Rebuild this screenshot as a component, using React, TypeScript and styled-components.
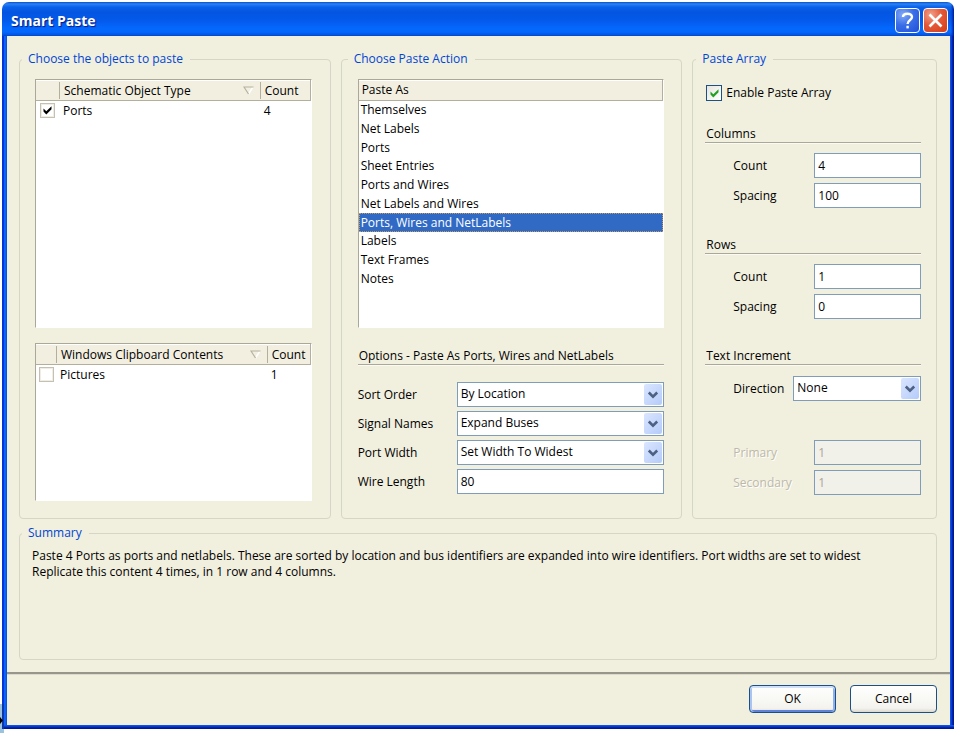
import React, { useId, useState } from "react";
import styled, { createGlobalStyle, css } from "styled-components";

const face = "#f1efde";
const fieldBorder = "#7f9db9";

const tick = (color: string) =>
  `url("data:image/svg+xml,${encodeURIComponent(
    `<svg xmlns='http://www.w3.org/2000/svg' viewBox='0 0 11 11'><path d='M1.5 3.5 L4.3 6.3 L9.5 1.2 V4.2 L4.3 9.4 L1.5 6.6 Z' fill='${color}'/></svg>`
  )}")`;

const GlobalStyle = createGlobalStyle`
  * { box-sizing: border-box; }
  body { margin: 0; background: #fff; }
  body, button, input, select {
    font-family: "Open Sans", "Noto Sans", sans-serif;
    font-size: 12px;
    line-height: 16px;
    color: #000;
  }
`;

const Desktop = styled.div`
  position: relative;
  display: flex;
  min-height: 100vh;
  padding: 2px 5px 4px 2px;
`;

const BackgroundSliver = styled.svg`
  position: absolute;
  left: 0;
  bottom: 0;
  width: 4px;
  height: 29px;
`;

const Dialog = styled.section`
  flex: 1;
  display: flex;
  flex-direction: column;
  min-width: 0;
`;

const TitleBar = styled.header`
  display: flex;
  align-items: center;
  gap: 3px;
  height: 34px;
  padding: 3px 6px 0 9px;
  border-radius: 7px 7px 0 0;
  background:
    linear-gradient(270deg, #0019a0 0, transparent 3px),
    linear-gradient(#0b4fc6 0, #2b83f5 2px, #0a62ea 5px, #0455e0 10px, #0459ea 18px, #0468fd 26px, #0468fd 30px, #0553e0 33px, #0642c4 34px);
`;

const Title = styled.h1`
  flex: 1;
  margin: 0;
  font-size: 14px;
  line-height: 20px;
  font-weight: 700;
  color: #fff;
  text-shadow: 1px 1px 1px #0a1883;
`;

const CaptionButton = styled.button<{ $danger?: boolean }>`
  display: grid;
  place-items: center;
  width: 25px;
  height: 25px;
  padding: 0;
  border: 1px solid #fff;
  border-radius: 4px;
  background: ${(p) =>
    p.$danger
      ? "radial-gradient(circle at 30% 25%, #f0a08a 0, #e4593a 45%, #d43c12 100%)"
      : "radial-gradient(circle at 30% 25%, #85aaf5 0, #3a6ee8 45%, #1f4fd6 100%)"};
`;

const Frame = styled.div`
  flex: 1;
  display: flex;
  padding: 0 4px 4px 5px;
  background:
    linear-gradient(0deg, #00128c 0, #0029b4 2px, #0f52e8 3px, #0f52e8 4px, transparent 4px),
    linear-gradient(90deg, #0036d8 0 2px, #0c62fb 2px 4px, #0b52d8 4px 5px, transparent 5px),
    linear-gradient(270deg, #00128c 0, #0029b4 2px, #0f52e8 3px, #0f52e8 4px, transparent 4px);
`;

const Surface = styled.form`
  flex: 1;
  display: flex;
  flex-direction: column;
  min-width: 0;
  background: ${face};
`;

const Content = styled.div`
  flex: 1;
  display: flex;
  flex-direction: column;
  gap: 6px;
  padding: 15px 13px 12px 12px;
`;

const Groups = styled.div`
  display: grid;
  grid-template-columns: 312fr 342fr 245fr;
  gap: 10px;
`;

const Group = styled.fieldset`
  min-width: 0;
  margin: 0;
  padding: 12px 18px 17px 15px;
  border: 1px solid #d6d6c6;
  border-radius: 4px;
`;

const ActionGroup = styled(Group)`
  padding: 12px 17px 17px 16px;
`;

const ArrayGroup = styled(Group)`
  padding: 18px 15px 17px 12px;
`;

const SummaryGroup = styled(Group)`
  flex: 1;
  padding: 7px 12px;
`;

const GroupTitle = styled.legend<{ $pull: number }>`
  margin-left: -${(p) => p.$pull}px;
  padding: 0 7px 0 6px;
  color: #0046d5;
`;

const Stack = styled.div`
  display: flex;
  flex-direction: column;
  gap: 15px;
`;

const ListBox = styled.div<{ $height: number }>`
  height: ${(p) => p.$height}px;
  border: 1px solid #fff;
  border-top-color: #aaa898;
  border-left-color: #aaa898;
  background: #fff;
`;

const Table = styled.table`
  width: 100%;
  table-layout: fixed;
  border-spacing: 0;
`;

const Col = styled.col<{ $width?: number }>`
  width: ${(p) => (p.$width ? `${p.$width}px` : "auto")};
`;

const headerCell = css`
  height: 21px;
  padding: 2px 3px 1px;
  font-weight: 400;
  text-align: left;
  white-space: nowrap;
  border-bottom: 1px solid #b3af9d;
  background: linear-gradient(#fff 0 1px, #f2efe1 1px);
`;

const Th = styled.th`
  ${headerCell}
  background:
    linear-gradient(#b3af9d, #b3af9d) right 1px top 2px / 1px 17px no-repeat,
    linear-gradient(#fff 0 1px, #f2efe1 1px);
  &:last-child {
    border-right: 1px solid #b3af9d;
    background: linear-gradient(#fff 0 1px, #f2efe1 1px);
  }
`;

const SortHeader = styled.span`
  display: flex;
  align-items: center;
  justify-content: space-between;
  padding-right: 5px;
`;

const Td = styled.td`
  height: 19px;
  padding: 0 2px;
`;

const CheckCell = styled.td<{ $indent: number }>`
  height: 19px;
  padding: 0 0 0 ${(p) => p.$indent}px;
`;

const ListCheck = styled.input`
  display: block;
  appearance: none;
  width: 15px;
  height: 15px;
  margin: 0;
  border: 1px solid #c4c1b4;
  background: #fff center / 11px 11px no-repeat;
  box-shadow: inset 0 0 0 1px #efede4;
  &:checked {
    background-image: ${tick("#000")};
  }
`;

const ListHeader = styled.div`
  ${headerCell}
  border-right: 1px solid #b3af9d;
`;

const Options = styled.div`
  display: grid;
  grid-auto-rows: 1fr;
  height: 187px;
`;

const Option = styled.button<{ $selected: boolean }>`
  display: flex;
  align-items: center;
  padding: 0 2px;
  border: 0;
  text-align: left;
  background: ${(p) => (p.$selected ? "#316ac5" : "transparent")};
  color: ${(p) => (p.$selected ? "#fff" : "#000")};
  outline: ${(p) => (p.$selected ? "1px dotted #c69b5a" : "none")};
  outline-offset: -1px;
`;

const Heading = styled.h2<{ $gap: number }>`
  height: 18px;
  margin: ${(p) => p.$gap}px 0 0;
  padding-left: 1px;
  font-size: 12px;
  line-height: 18px;
  font-weight: 400;
  border-bottom: 1px solid #aaa898;
  box-shadow: 0 1px 0 #fbfaf3;
`;

const CheckLine = styled.label`
  display: flex;
  align-items: center;
  gap: 4px;
`;

const Check = styled.input`
  appearance: none;
  width: 16px;
  height: 16px;
  margin: 0 0 0 1px;
  border: 1px solid #1c5180;
  background: linear-gradient(135deg, #e6e5df, #fff) center / 100%;
  &:checked {
    background: ${tick("#21a121")} center / 11px 11px no-repeat,
      linear-gradient(135deg, #e6e5df, #fff);
  }
`;

const Fields = styled.div<{ $label: number; $gap: number; $top: number; $indent?: number }>`
  display: grid;
  grid-template-columns: ${(p) => p.$label}px 1fr;
  grid-auto-rows: 25px;
  row-gap: ${(p) => p.$gap}px;
  align-items: center;
  margin-top: ${(p) => p.$top}px;
  padding-left: ${(p) => p.$indent ?? 0}px;
`;

const Label = styled.label<{ $off?: boolean }>`
  ${(p) =>
    p.$off &&
    css`
      color: #bdb9a8;
      text-shadow: 1px 1px 0 #fff;
    `}
`;

const TextBox = styled.input`
  width: 100%;
  height: 25px;
  padding: 0 4px 1px 3px;
  border: 1px solid ${fieldBorder};
  border-radius: 0;
  background: #fff;
  &:disabled {
    color: #aca899;
    background: #f1f0e9;
  }
`;

const SelectWrap = styled.span`
  position: relative;
  display: block;
`;

const SelectBox = styled.select`
  appearance: none;
  display: block;
  width: 100%;
  height: 25px;
  padding: 0 22px 1px 3px;
  border: 1px solid ${fieldBorder};
  border-radius: 0;
  background: #fff;
`;

const SelectArrow = styled.svg`
  position: absolute;
  top: 2px;
  right: 2px;
  width: 18px;
  height: 21px;
  pointer-events: none;
`;

const SummaryText = styled.p`
  margin: 0;
`;

const Footer = styled.footer`
  display: flex;
  justify-content: flex-end;
  gap: 14px;
  padding: 11px 13px 12px;
  border-top: 2px solid #98968a;
  box-shadow: inset 0 1px 0 #dcdaca;
`;

const PushButton = styled.button<{ $primary?: boolean }>`
  width: 87px;
  height: 28px;
  padding: 0;
  border: 1px solid #1c4f86;
  border-radius: 4px;
  background: linear-gradient(#fff, #f4f3ee 85%, #dcd8ce);
  box-shadow: ${(p) =>
    p.$primary
      ? "inset 0 2px 0 #cee0fb, inset 2px 0 0 #a9c4f2, inset -2px 0 0 #8eb0ec, inset 0 -2px 0 #5f83d8"
      : "none"};
`;

function SortIcon() {
  return (
    <svg width="11" height="9" viewBox="0 0 11 9" aria-hidden="true">
      <path d="M10 1 L5.5 8" stroke="#fff" fill="none" strokeWidth="1.4" />
      <path d="M10.5 1 H1 L5.5 8" stroke="#b5b1a0" fill="none" strokeWidth="1.2" />
    </svg>
  );
}

function ObjectList(props: {
  title: string;
  row: string;
  count: number;
  height: number;
  checkWidth: number;
  countWidth: number;
  indent: number;
  checked?: boolean;
}) {
  return (
    <ListBox $height={props.height}>
      <Table>
        <colgroup>
          <Col $width={props.checkWidth} />
          <Col />
          <Col $width={props.countWidth} />
        </colgroup>
        <thead>
          <tr>
            <Th />
            <Th>
              <SortHeader>
                {props.title}
                <SortIcon />
              </SortHeader>
            </Th>
            <Th>Count</Th>
          </tr>
        </thead>
        <tbody>
          <tr>
            <CheckCell $indent={props.indent}>
              <ListCheck type="checkbox" aria-label={props.row} defaultChecked={props.checked} />
            </CheckCell>
            <Td>{props.row}</Td>
            <Td>{props.count}</Td>
          </tr>
        </tbody>
      </Table>
    </ListBox>
  );
}

function TextField({ label, value, off }: { label: string; value: string; off?: boolean }) {
  const id = useId();
  return (
    <>
      <Label htmlFor={id} $off={off}>{label}</Label>
      <TextBox id={id} defaultValue={value} disabled={off} />
    </>
  );
}

function SelectField({ label, value }: { label: string; value: string }) {
  const id = useId();
  return (
    <>
      <Label htmlFor={id}>{label}</Label>
      <SelectWrap>
        <SelectBox id={id} defaultValue={value}>
          <option>{value}</option>
        </SelectBox>
        <SelectArrow viewBox="0 0 18 21" aria-hidden="true">
          <defs>
            <linearGradient id={`${id}g`} x1="0" y1="0" x2="1" y2="1">
              <stop offset="0" stopColor="#dbe6ff" />
              <stop offset="1" stopColor="#b4cbf9" />
            </linearGradient>
          </defs>
          <rect width="18" height="21" rx="2" fill={`url(#${id}g)`} />
          <path d="M4.8 8.5 L9 12.7 L13.2 8.5" fill="none" stroke="#4d6185" strokeWidth="2.6" />
        </SelectArrow>
      </SelectWrap>
    </>
  );
}

const actions = [
  "Themselves",
  "Net Labels",
  "Ports",
  "Sheet Entries",
  "Ports and Wires",
  "Net Labels and Wires",
  "Ports, Wires and NetLabels",
  "Labels",
  "Text Frames",
  "Notes",
];

export default function App() {
  const [action, setAction] = useState("Ports, Wires and NetLabels");
  return (
    <Desktop>
      <GlobalStyle />
      <Dialog role="dialog" aria-labelledby="dialog-title">
        <TitleBar>
          <Title id="dialog-title">Smart Paste</Title>
          <CaptionButton type="button" aria-label="Help">
            <svg width="17" height="19" viewBox="0 0 17 19" fill="none" stroke="#fff" strokeWidth="2.4">
              <path d="M4 6 C4 1.6 13 1.6 13 6 C13 9 8.6 9 8.6 13" />
              <path d="M8.6 14.8 V17.4" />
            </svg>
          </CaptionButton>
          <CaptionButton type="button" aria-label="Close" $danger>
            <svg width="17" height="17" viewBox="0 0 17 17" stroke="#fff" strokeWidth="2.6">
              <path d="M2.5 2.5 L14.5 14.5 M14.5 2.5 L2.5 14.5" />
            </svg>
          </CaptionButton>
        </TitleBar>
        <Frame>
          <Surface onSubmit={(e) => e.preventDefault()}>
            <Content>
              <Groups>
                <Group>
                  <GroupTitle $pull={13}>Choose the objects to paste</GroupTitle>
                  <Stack>
                    <ObjectList title="Schematic Object Type" row="Ports" count={4} height={249} checkWidth={25} countWidth={49} indent={4} checked />
                    <ObjectList title="Windows Clipboard Contents" row="Pictures" count={1} height={158} checkWidth={22} countWidth={42} indent={3} />
                  </Stack>
                </Group>
                <ActionGroup>
                  <GroupTitle $pull={10}>Choose Paste Action</GroupTitle>
                  <ListBox $height={249}>
                    <ListHeader>Paste As</ListHeader>
                    <Options>
                      {actions.map((a) => (
                        <Option key={a} type="button" $selected={a === action} onClick={() => setAction(a)}>
                          {a}
                        </Option>
                      ))}
                    </Options>
                  </ListBox>
                  <Heading $gap={19}>Options - Paste As Ports, Wires and NetLabels</Heading>
                  <Fields $label={99} $gap={4} $top={17}>
                    <SelectField label="Sort Order" value="By Location" />
                    <SelectField label="Signal Names" value="Expand Buses" />
                    <SelectField label="Port Width" value="Set Width To Widest" />
                    <TextField label="Wire Length" value="80" />
                  </Fields>
                </ActionGroup>
                <ArrayGroup>
                  <GroupTitle $pull={9}>Paste Array</GroupTitle>
                  <CheckLine>
                    <Check type="checkbox" defaultChecked />
                    Enable Paste Array
                  </CheckLine>
                  <Heading $gap={24}>Columns</Heading>
                  <Fields $label={81} $gap={5} $top={10} $indent={28}>
                    <TextField label="Count" value="4" />
                    <TextField label="Spacing" value="100" />
                  </Fields>
                  <Heading $gap={28}>Rows</Heading>
                  <Fields $label={81} $gap={5} $top={10} $indent={28}>
                    <TextField label="Count" value="1" />
                    <TextField label="Spacing" value="0" />
                  </Fields>
                  <Heading $gap={28}>Text Increment</Heading>
                  <Fields $label={60} $gap={5} $top={11} $indent={28}>
                    <SelectField label="Direction" value="None" />
                  </Fields>
                  <Fields $label={81} $gap={5} $top={39} $indent={28}>
                    <TextField label="Primary" value="1" off />
                    <TextField label="Secondary" value="1" off />
                  </Fields>
                </ArrayGroup>
              </Groups>
              <SummaryGroup>
                <GroupTitle $pull={10}>Summary</GroupTitle>
                <SummaryText>
                  Paste 4 Ports as ports and netlabels. These are sorted by location and bus identifiers are expanded into wire identifiers. Port widths are set to widest
                </SummaryText>
                <SummaryText>Replicate this content 4 times, in 1 row and 4 columns.</SummaryText>
              </SummaryGroup>
            </Content>
            <Footer>
              <PushButton type="submit" $primary>OK</PushButton>
              <PushButton type="button">Cancel</PushButton>
            </Footer>
          </Surface>
        </Frame>
      </Dialog>
      <BackgroundSliver viewBox="0 0 4 29" aria-hidden="true">
        <rect width="2" height="29" fill="#9cc3de" />
        <rect x="2" width="2" height="29" fill="#0a38a8" />
        <rect x="2" y="25" width="2" height="4" fill="#9cc3de" />
        <path d="M0 13 L3 16.5 L0 20 Z" fill="#000" />
      </BackgroundSliver>
    </Desktop>
  );
}
